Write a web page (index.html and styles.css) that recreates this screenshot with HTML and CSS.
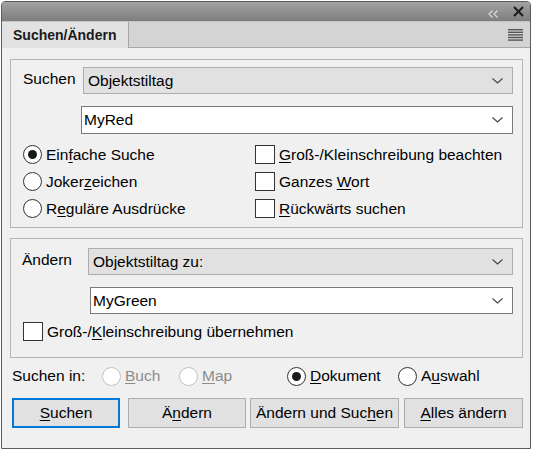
FILE: index.html
```html
<!DOCTYPE html>
<html lang="de">
<head>
<meta charset="utf-8">
<title>Suchen/Ändern</title>
<link rel="stylesheet" href="styles.css">
</head>
<body>
<div class="window">
  <div class="titlebar">
    <svg class="ico-collapse" width="11" height="8" viewBox="0 0 11 8"><path d="M4.5 0.5 L1 4 L4.5 7.5 M9.5 0.5 L6 4 L9.5 7.5" fill="none" stroke="#d8d8d8" stroke-width="1.3"/></svg>
    <svg class="ico-close" width="11" height="11" viewBox="0 0 11 11"><path d="M1 1 L10 10 M10 1 L1 10" fill="none" stroke="#1c1c1c" stroke-width="2"/></svg>
  </div>
  <div class="tabrow">
    <div class="tab">Suchen/Ändern</div>
    <div class="tabfill">
      <svg class="ico-menu" width="15" height="12" viewBox="0 0 15 12"><g fill="#555"><rect x="0" y="0" width="15" height="1.4"/><rect x="0" y="2.6" width="15" height="1.4"/><rect x="0" y="5.2" width="15" height="1.4"/><rect x="0" y="7.8" width="15" height="1.4"/><rect x="0" y="10.4" width="15" height="1.4"/></g></svg>
    </div>
  </div>
  <div class="content">
    <div class="group group-find">
      <div class="row">
        <span class="label label-find">Suchen</span>
        <div class="select select-gray"><span>Objektstiltag</span><svg class="chev" width="11" height="6" viewBox="0 0 11 6"><path d="M0.5 0.5 L5.5 5 L10.5 0.5" fill="none" stroke="#444" stroke-width="1.1"/></svg></div>
      </div>
      <div class="row row-sub row-sub-find">
        <div class="select select-white"><span>MyRed</span><svg class="chev" width="11" height="6" viewBox="0 0 11 6"><path d="M0.5 0.5 L5.5 5 L10.5 0.5" fill="none" stroke="#444" stroke-width="1.1"/></svg></div>
      </div>
      <div class="options">
        <div class="opt"><span class="radio checked"></span><span>Ein<u>f</u>ache Suche</span></div>
        <div class="opt"><span class="check"></span><span><u>G</u>roß-/Kleinschreibung beachten</span></div>
        <div class="opt"><span class="radio"></span><span>Joker<u>z</u>eichen</span></div>
        <div class="opt"><span class="check"></span><span>Ganzes <u>W</u>ort</span></div>
        <div class="opt"><span class="radio"></span><span>R<u>e</u>guläre Ausdrücke</span></div>
        <div class="opt"><span class="check"></span><span><u>R</u>ückwärts suchen</span></div>
      </div>
    </div>
    <div class="group group-change">
      <div class="row">
        <span class="label label-change">Ändern</span>
        <div class="select select-gray"><span>Objektstiltag zu:</span><svg class="chev" width="11" height="6" viewBox="0 0 11 6"><path d="M0.5 0.5 L5.5 5 L10.5 0.5" fill="none" stroke="#444" stroke-width="1.1"/></svg></div>
      </div>
      <div class="row row-sub row-sub-change">
        <div class="select select-white"><span>MyGreen</span><svg class="chev" width="11" height="6" viewBox="0 0 11 6"><path d="M0.5 0.5 L5.5 5 L10.5 0.5" fill="none" stroke="#444" stroke-width="1.1"/></svg></div>
      </div>
      <div class="opt opt-single"><span class="check"></span><span>Groß-/<u>K</u>leinschreibung übernehmen</span></div>
    </div>
    <div class="scope">
      <span class="scope-label">Suchen in:</span>
      <div class="opt scope-buch disabled"><span class="radio"></span><span><u>B</u>uch</span></div>
      <div class="opt scope-map disabled"><span class="radio"></span><span><u>M</u>ap</span></div>
      <div class="opt scope-doc"><span class="radio checked"></span><span><u>D</u>okument</span></div>
      <div class="opt scope-sel"><span class="radio"></span><span>A<u>u</u>swahl</span></div>
    </div>
    <div class="buttons">
      <button class="btn btn-find default"><u>S</u>uchen</button>
      <button class="btn btn-change">Ä<u>n</u>dern</button>
      <button class="btn btn-changefind">Ändern und Suc<u>h</u>en</button>
      <button class="btn btn-all"><u>A</u>lles ändern</button>
    </div>
  </div>
</div>
</body>
</html>
```
FILE: styles.css
```css
* { box-sizing: border-box; }
html, body { margin: 0; padding: 0; background: #ffffff; }
body {
  font-family: "Liberation Sans", Arial, sans-serif;
  font-size: 15.5px;
  color: #000;
}
u { text-decoration: underline; text-underline-offset: 2px; text-decoration-thickness: 1px; }

.window {
  margin: 1px 0 0 1px;
  width: 530px;
  height: 448px;
  border: 1px solid #5c5c5c;
  border-radius: 4px 4px 0 0;
  background: #f0f0f0;
  display: flex;
  flex-direction: column;
  overflow: hidden;
}

.titlebar {
  height: 19px;
  flex: none;
  background: linear-gradient(#a2a2a2, #7e7e7e);
  display: flex;
  align-items: center;
  justify-content: flex-end;
  padding-right: 6px;
  gap: 14px;
}
.ico-collapse { margin-top: 4px; }
.ico-close { margin-top: 0; }

.tabrow {
  height: 27px;
  flex: none;
  display: flex;
  border-top: 1px solid #c4c4c4;
  background: #d4d4d4;
}
.tab {
  width: 127px;
  background: #e2e2e2;
  border-right: 1px solid #a6a6a6;
  font-weight: bold;
  font-size: 14px;
  color: #1a1a1a;
  padding-left: 11px;
  display: flex;
  align-items: center;
}
.tabfill {
  flex: 1;
  border-bottom: 1px solid #a8a8a8;
  display: flex;
  align-items: center;
  justify-content: flex-end;
  padding-right: 7px;
}
.ico-menu { margin-top: 0; }

.content {
  flex: 1;
  padding: 11px 7px 0 8px;
}

.group {
  border: 1px solid #b4b4b4;
  padding: 7px 9px 0 12px;
}
.group-find { height: 169px; }
.group-change { height: 120px; margin-top: 10px; padding-top: 9px; }

.row { display: flex; align-items: center; }
.label { flex: none; }
.label-find { width: 60px; margin-top: -4px; }
.label-change { width: 66px; margin-left: -1px; margin-top: -4px; }

.select {
  flex: 1;
  height: 27px;
  display: flex;
  align-items: center;
  justify-content: space-between;
  padding: 0 9px 0 4px;
}
.select-gray { background: #e1e1e1; border: 1px solid #adadad; }
.select-white { background: #ffffff; border: 1px solid #7a7a7a; height: 28px; padding-left: 2px; }

.row-sub-find { margin-top: 12px; margin-left: 58px; }
.row-sub-change { margin-top: 12px; margin-left: 67px; }
.row-sub-change .select-white { height: 27px; }

.options {
  margin-top: 7px;
  display: grid;
  grid-template-columns: 232px 1fr;
  grid-auto-rows: 27px;
}
.opt { display: flex; align-items: center; white-space: nowrap; }
.opt-single { height: 27px; margin-top: 4px; }

.radio {
  flex: none;
  width: 19px;
  height: 19px;
  border: 1px solid #333;
  border-radius: 50%;
  background: #fff;
  margin-right: 4px;
  display: flex;
  align-items: center;
  justify-content: center;
}
.radio.checked::after {
  content: "";
  width: 9px;
  height: 9px;
  border-radius: 50%;
  background: #1a1a1a;
}
.check {
  flex: none;
  width: 20px;
  height: 19px;
  border: 1px solid #333;
  background: #fff;
  margin-right: 4px;
}

.disabled { color: #8c8c8c; }
.disabled .radio { border-color: #c2c2c2; }

.scope {
  display: flex;
  align-items: center;
  height: 24px;
  margin-top: 6px;
  padding-left: 2px;
}
.scope-label { width: 90px; }
.scope-buch { width: 77px; }
.scope-map { width: 108px; }
.scope-doc { width: 111px; }

.buttons {
  display: flex;
  margin-top: 10px;
  padding-left: 2px;
  height: 30px;
}
.btn {
  font-family: "Liberation Sans", Arial, sans-serif;
  font-size: 15.5px;
  color: #000;
  height: 30px;
  background: #e1e1e1;
  border: 1px solid #adadad;
  padding: 0;
}
.btn.default { border: 2px solid #0078d7; }
.btn-find { width: 108px; }
.btn-change { width: 118px; margin-left: 8px; }
.btn-changefind { width: 149px; margin-left: 4px; }
.btn-all { width: 119px; margin-left: 5px; }
```
